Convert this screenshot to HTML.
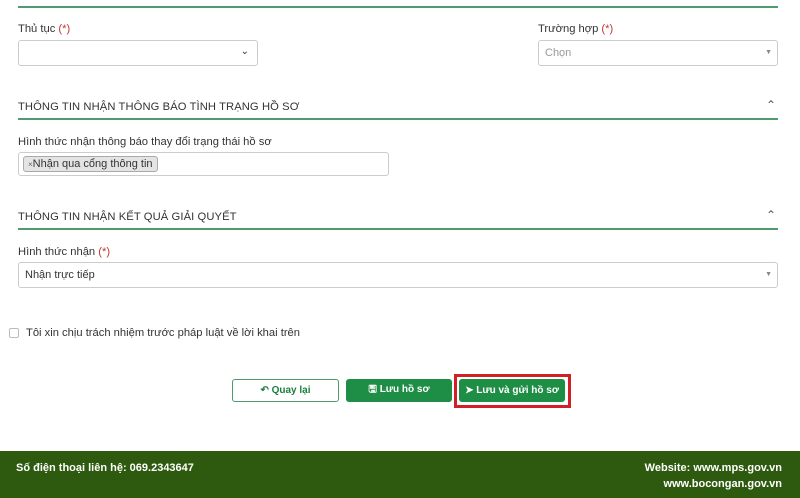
<!DOCTYPE html>
<html><head><meta charset="utf-8"><style>
*{box-sizing:border-box;margin:0;padding:0}
body{width:800px;height:498px;background:#fff;font-family:"Liberation Sans",sans-serif;font-size:11px;color:#333;position:relative;overflow:hidden}
.a{position:absolute}
.line{position:absolute;height:2px;background:#4f9a6e;left:18px;width:760px}
.lbl{position:absolute;font-size:11.2px;color:#333}
.req{color:#c0392b}
.box{position:absolute;border:1px solid #ccc;border-radius:3px;background:#fff}
.hd{position:absolute;left:18px;font-size:11.2px;color:#333;letter-spacing:0.1px}
.btn{position:absolute;height:23px;border-radius:3px;font-size:10px;font-weight:bold;display:flex;align-items:center;justify-content:center}
.g{background:#1e8e46;color:#fff}
</style></head><body>
<div class="line" style="top:6px"></div>
<div class="lbl" style="left:18px;top:23px">Thủ tục <span class="req">(*)</span></div>
<div class="box" style="left:18px;top:40px;width:240px;height:26px"><span class="a" style="right:8px;top:5px;font-size:10px">&#8964;</span></div>
<div class="lbl" style="left:538px;top:23px">Trường hợp <span class="req">(*)</span></div>
<div class="box" style="left:538px;top:40px;width:240px;height:26px"><span class="a" style="left:6px;top:6px;color:#999">Chọn</span><span class="a" style="right:5px;top:8px;font-size:7px;color:#888">▼</span></div>

<div class="hd" style="top:101px">THÔNG TIN NHẬN THÔNG BÁO TÌNH TRẠNG HỒ SƠ</div>
<div class="a" style="left:766px;top:98px;font-size:12px;color:#555">&#8963;</div>
<div class="line" style="top:118px"></div>
<div class="lbl" style="left:18px;top:136px">Hình thức nhận thông báo thay đổi trạng thái hồ sơ</div>
<div class="box" style="left:18px;top:152px;width:371px;height:24px"><span class="a" style="left:4px;top:3px;height:16px;padding:1px 4px;background:#e4e4e4;border:1px solid #aaa;border-radius:3px;font-size:11px;line-height:13px"><span style="font-size:8px;color:#666">×</span>Nhận qua cổng thông tin</span></div>

<div class="hd" style="top:211px">THÔNG TIN NHẬN KẾT QUẢ GIẢI QUYẾT</div>
<div class="a" style="left:766px;top:208px;font-size:12px;color:#555">&#8963;</div>
<div class="line" style="top:228px"></div>
<div class="lbl" style="left:18px;top:246px">Hình thức nhận <span class="req">(*)</span></div>
<div class="box" style="left:18px;top:262px;width:760px;height:26px"><span class="a" style="left:6px;top:6px">Nhận trực tiếp</span><span class="a" style="right:5px;top:8px;font-size:7px;color:#888">▼</span></div>

<div class="a" style="left:9px;top:328px;width:10px;height:10px;border:1px solid #bbb;border-radius:2px"></div>
<div class="lbl" style="left:26px;top:327px">Tôi xin chịu trách nhiệm trước pháp luật về lời khai trên</div>

<div class="btn" style="left:232px;top:379px;width:107px;border:1px solid #4f9a6e;color:#1e7e3e">&#8630; Quay lại</div>
<div class="btn g" style="left:346px;top:379px;width:106px">&#128427; Lưu hồ sơ</div>
<div class="a" style="left:454px;top:374px;width:117px;height:34px;border:3px solid #d01f27"></div>
<div class="btn g" style="left:459px;top:379px;width:106px">&#10148; Lưu và gửi hồ sơ</div>

<div class="a" style="left:0;top:451px;width:800px;height:47px;background:#2d5a0e;color:#fff;font-weight:bold;font-size:11px">
<div class="a" style="left:16px;top:11px">Số điện thoại liên hệ: 069.2343647</div>
<div class="a" style="right:18px;top:11px">Website: www.mps.gov.vn</div>
<div class="a" style="right:18px;top:27px">www.bocongan.gov.vn</div>
</div>
</body></html>
